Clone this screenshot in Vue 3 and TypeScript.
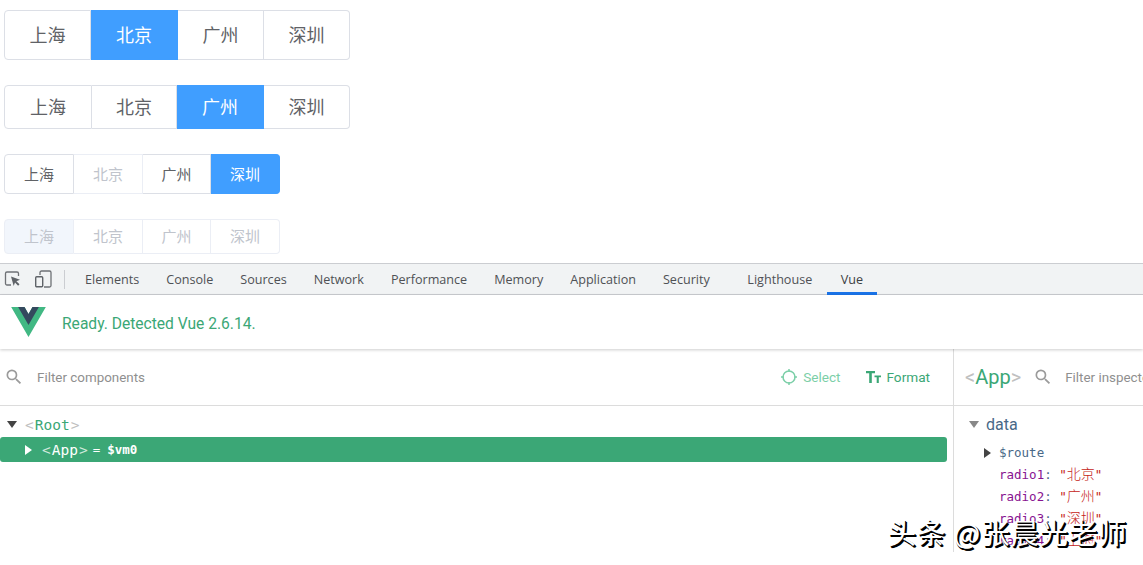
<script setup lang="ts">
interface Seg { label: string; state?: 'on' | 'off' }
interface Group { size: string; items: Seg[]; disabled?: boolean }
const groups: Group[] = [
  { size: 'lg', items: [{ label: '上海' }, { label: '北京', state: 'on' }, { label: '广州' }, { label: '深圳' }] },
  { size: 'md', items: [{ label: '上海' }, { label: '北京' }, { label: '广州', state: 'on' }, { label: '深圳' }] },
  { size: 'sm', items: [{ label: '上海' }, { label: '北京', state: 'off' }, { label: '广州' }, { label: '深圳', state: 'on' }] },
  { size: 'xs', disabled: true, items: [{ label: '上海', state: 'off' }, { label: '北京', state: 'off' }, { label: '广州', state: 'off' }, { label: '深圳', state: 'off' }] },
]
const tabs = ['Elements', 'Console', 'Sources', 'Network', 'Performance', 'Memory', 'Application', 'Security', 'Lighthouse', 'Vue']
const rows = [
  { k: 'radio1', v: '北京' },
  { k: 'radio2', v: '广州' },
  { k: 'radio3', v: '深圳' },
  { k: 'radio4', v: '上海' },
]
</script>

<template>
  <div class="page">
    <section class="demo">
      <div v-for="g in groups" :key="g.size" class="group" :class="[g.size, { dis: g.disabled }]">
        <span v-for="s in g.items" :key="s.label" class="seg" :class="s.state">{{ s.label }}</span>
      </div>
    </section>

    <section class="devtools">
      <header class="tabbar">
        <div class="tools">
          <svg width="18" height="18" viewBox="0 0 18 18" fill="none">
            <path d="M7 15H3A1.500 1.500 0 0 1 1.500 13.500V3.500A1.500 1.500 0 0 1 3 2h10A1.500 1.500 0 0 1 14.500 3.500V6" stroke="#6e7175" stroke-width="1.300" />
            <path d="M7 6.500l9 3.300-3.600 1.400 3.100 3.100-1.400 1.400-3.100-3.100-1.300 3.500z" fill="#5f6368" />
          </svg>
          <svg width="18" height="18" viewBox="0 0 18 18" fill="none" class="device">
            <path d="M6 5V2.500A1.500 1.500 0 0 1 7.500 1h8A1.500 1.500 0 0 1 17 2.500v13a1.500 1.500 0 0 1-1.500 1.500H10" stroke="#6e7175" stroke-width="1.300" />
            <rect x="1.700" y="6.700" width="7" height="10" rx="1" stroke="#5f6368" stroke-width="1.400" />
          </svg>
          <i class="sep"></i>
        </div>
        <span v-for="t in tabs" :key="t" class="tab" :class="{ active: t === 'Vue', far: t === 'Lighthouse' }">{{ t }}</span>
      </header>

      <div class="banner">
        <svg class="logo" width="35" height="30" viewBox="0 0 261.760 226.690">
          <path d="M161.096.001l-30.225 52.351L100.647.001H-.005l130.877 226.688L261.749.001z" fill="#41b883" />
          <path d="M161.096.001l-30.225 52.351L100.647.001H52.346l78.526 136.010L209.398.001z" fill="#34495e" />
        </svg>
        <span class="ready">Ready. Detected Vue 2.6.14.</span>
      </div>

      <div class="panes">
        <div class="tree-pane">
          <div class="bar">
            <svg class="mag" width="20" height="20" viewBox="0 0 24 24" fill="#9b9b9b"><path d="M15.500 14h-.790l-.280-.270A6.470 6.470 0 0 0 16 9.500 6.500 6.500 0 1 0 9.500 16c1.610 0 3.090-.590 4.230-1.570l.270.280v.790l5 4.990L20.490 19zm-6 0C7.010 14 5 11.990 5 9.500S7.010 5 9.500 5 14 7.010 14 9.500 11.990 14 9.500 14z" /></svg>
            <span class="filter">Filter components</span>
            <span class="spacer"></span>
            <span class="action select">
              <svg width="18" height="18" viewBox="0 0 18 18" fill="none" stroke="#7ccfa8" stroke-width="1.500"><circle cx="9" cy="9" r="6" /><path d="M9 1v3M9 14v3M1 9h3M14 9h3" /></svg>
              Select
            </span>
            <span class="action format">
              <svg width="16" height="14" viewBox="0 0 16 14" fill="#3ba776"><path d="M0 1h9v2.300H5.800V13H3.200V3.300H0z" /><path d="M8.500 5.500H15v1.800h-2.200V13h-2.100V7.300H8.500z" /></svg>
              Format
            </span>
          </div>
          <div class="tree">
            <div class="node root"><i class="tri t-down"></i><span class="b">&lt;</span>Root<span class="b">&gt;</span></div>
            <div class="node sel"><i class="tri t-right"></i><span class="b">&lt;</span>App<span class="b">&gt;</span><span class="eq">=</span><span class="vm">$vm0</span></div>
          </div>
        </div>
        <aside class="state-pane">
          <div class="bar rbar">
            <span class="title"><span class="b">&lt;</span>App<span class="b">&gt;</span></span>
            <svg class="mag" width="20" height="20" viewBox="0 0 24 24" fill="#9b9b9b"><path d="M15.500 14h-.790l-.280-.270A6.470 6.470 0 0 0 16 9.500 6.500 6.500 0 1 0 9.500 16c1.610 0 3.090-.590 4.230-1.570l.270.280v.790l5 4.990L20.490 19zm-6 0C7.010 14 5 11.990 5 9.500S7.010 5 9.500 5 14 7.010 14 9.500 11.990 14 9.500 14z" /></svg>
            <span class="filter">Filter inspected data</span>
          </div>
          <div class="state">
            <div class="head"><i class="tri t-grey"></i>data</div>
            <div class="prop route"><i class="tri t-dark"></i>$route</div>
            <div v-for="r in rows" :key="r.k" class="prop"><span class="key">{{ r.k }}</span><span class="colon">:</span> <span class="val">"<span class="cjk">{{ r.v }}</span>"</span></div>
          </div>
        </aside>
      </div>
    </section>

    <div class="mark">头条 @张晨光老师</div>
  </div>
</template>

<style>
html, body { margin: 0; background: #fff; overflow: hidden; }
</style>

<style scoped>
.page {
  position: relative;
  width: 1143px;
  height: 565px;
  overflow: hidden;
  font-family: Roboto, "Noto Sans CJK SC", sans-serif;
}
.demo { display: flex; flex-direction: column; align-items: flex-start; gap: 25px; height: 263px; padding: 10px 0 0 4px; box-sizing: border-box; }
.group { display: flex; box-sizing: border-box; }
.seg {
  display: flex; align-items: center; justify-content: center;
  box-sizing: border-box;
  padding-bottom: 2px;
  color: #606266;
  background: #fff;
  border: 1px solid #dcdfe6;
  border-left-width: 0;
}
.seg:first-child { border-left-width: 1px; border-radius: 4px 0 0 4px; }
.seg:last-child { border-radius: 0 4px 4px 0; }
.seg.on { background: #409eff; border-color: #409eff; color: #fff; }
.seg.off { color: #c0c4cc; border-color: #ebeef5; }
.group.dis .seg:first-child { background: #f2f6fc; }
.lg .seg, .md .seg { font-size: 18px; }
.lg .seg { height: 50px; }
.md .seg { height: 44px; }
.sm .seg, .xs .seg { font-size: 15px; }
.sm .seg { height: 40px; }
.xs .seg { height: 35px; }
.lg .seg:nth-child(1) { width: 87px; }
.lg .seg:nth-child(2) { width: 87px; }
.lg .seg:nth-child(3) { width: 86px; }
.lg .seg:nth-child(4) { width: 86px; }
.md .seg:nth-child(1) { width: 88px; }
.md .seg:nth-child(2) { width: 85px; }
.md .seg:nth-child(3) { width: 87px; }
.md .seg:nth-child(4) { width: 86px; }
.sm .seg:nth-child(1), .xs .seg:nth-child(1) { width: 70px; }
.sm .seg:nth-child(2), .xs .seg:nth-child(2) { width: 69px; }
.sm .seg:nth-child(3), .xs .seg:nth-child(3) { width: 68px; }
.sm .seg:nth-child(4), .xs .seg:nth-child(4) { width: 69px; }

.devtools { display: flex; flex-direction: column; }
.tabbar {
  display: flex; align-items: stretch; box-sizing: border-box;
  height: 32px;
  background: #f1f3f4;
  border-top: 1px solid #cbcdd1;
  border-bottom: 1px solid #cbcdd1;
  font-family: "Open Sans", sans-serif;
  font-size: 12.600px;
  color: #4f5155;
}
.tools { display: flex; align-items: center; width: 73px; padding-left: 4px; box-sizing: border-box; }
.device { margin-left: 12px; }
.sep { width: 1px; height: 19px; background: #cbcdd1; margin-left: 12px; }
.tab { display: flex; align-items: center; padding: 3px 12px 0; margin-right: 3px; border-bottom: 3px solid transparent; margin-bottom: -1px; }
.tab.far { margin-left: 10.500px; }
.tab.active { border-bottom-color: #1a73e8; color: #3c4043; padding: 3px 13.500px 0; }

.banner {
  display: flex; align-items: center;
  height: 54px; padding: 3px 0 0 11px; box-sizing: border-box;
  box-shadow: 0 1px 3px rgba(0, 0, 0, .2);
  position: relative;
}
.logo { margin-top: -3px; }
.ready { margin-left: 16px; color: #3ba776; font-size: 15.600px; }

.panes { display: flex; flex: 1; height: 216px; }
.tree-pane { width: 953px; box-sizing: border-box; }
.state-pane { flex: 1; border-left: 1px solid #dcdcdc; overflow: hidden; min-width: 0; }
.bar { display: flex; align-items: center; height: 57px; box-sizing: border-box; border-bottom: 1px solid #dcdcdc; padding-left: 4px; color: #8f8f8f; font-size: 13.400px; white-space: nowrap; }
.mag { flex-shrink: 0; }
.filter { margin-left: 13px; }
.spacer { flex: 1; }
.action { display: flex; align-items: center; gap: 5px; margin-right: 23px; font-size: 13.600px; }
.select { color: #7ccfa8; margin-right: 25px; }
.format { color: #3ba776; }
.tree { padding-top: 6px; font-family: "DejaVu Sans Mono", monospace; font-size: 14.500px; }
.node { display: flex; align-items: center; height: 25px; }
.root { padding-left: 7px; color: #3ba776; }
.root .tri { margin-right: 7px; }
.sel { margin-right: 6px; padding-left: 25px; background: #3ba776; color: #fff; border-radius: 3px; }
.b { color: #c0c0c0; margin: 0 1px; }
.sel .b { color: #cfe9dc; }
.eq { margin: 0 7px 0 4px; font-size: 12.500px; }
.vm { font-size: 12.500px; font-weight: 700; }
.tri { display: inline-block; width: 0; height: 0; margin-right: 8px; }
.t-down { border-left: 5px solid transparent; border-right: 5px solid transparent; border-top: 7px solid #444; }
.t-right { border-top: 5px solid transparent; border-bottom: 5px solid transparent; border-left: 7px solid #fff; margin-right: 9px; }
.t-grey { border-left: 5px solid transparent; border-right: 5px solid transparent; border-top: 7px solid #888; margin-right: 7px; }
.t-dark { border-top: 5px solid transparent; border-bottom: 5px solid transparent; border-left: 7px solid #444; margin-right: 8px; }

.rbar { padding-left: 11px; }
.title { font-size: 20px; color: #3ba776; margin-right: 12px; }
.title .b { margin: 0; }
.rbar .filter { margin-left: 12px; }
.state { padding: 7px 0 0 15px; font-family: "DejaVu Sans Mono", "Noto Sans CJK SC", monospace; font-size: 12.500px; }
.head { display: flex; align-items: center; height: 22px; font-family: Roboto, sans-serif; font-size: 16px; color: #486887; margin-bottom: 7px; }
.prop { height: 22px; line-height: 22px; padding-left: 30px; white-space: nowrap; color: #486887; }
.route { display: flex; align-items: center; padding-left: 15px; }
.key { color: #881391; }
.colon { color: #486887; }
.val { color: #c41a16; }
.cjk { font-family: "Noto Sans CJK SC", sans-serif; font-size: 14px; font-weight: 300; line-height: 1; }

.mark {
  position: absolute; left: 888px; top: 512px;
  font-family: "Noto Sans CJK SC", sans-serif;
  font-size: 28px; line-height: 40px; letter-spacing: 1.200px; white-space: nowrap;
  color: #fff;
  text-shadow: 1px 1px 0 #000, 1px 2px 0 #000, 2px 2px 0 #000;
}
</style>
